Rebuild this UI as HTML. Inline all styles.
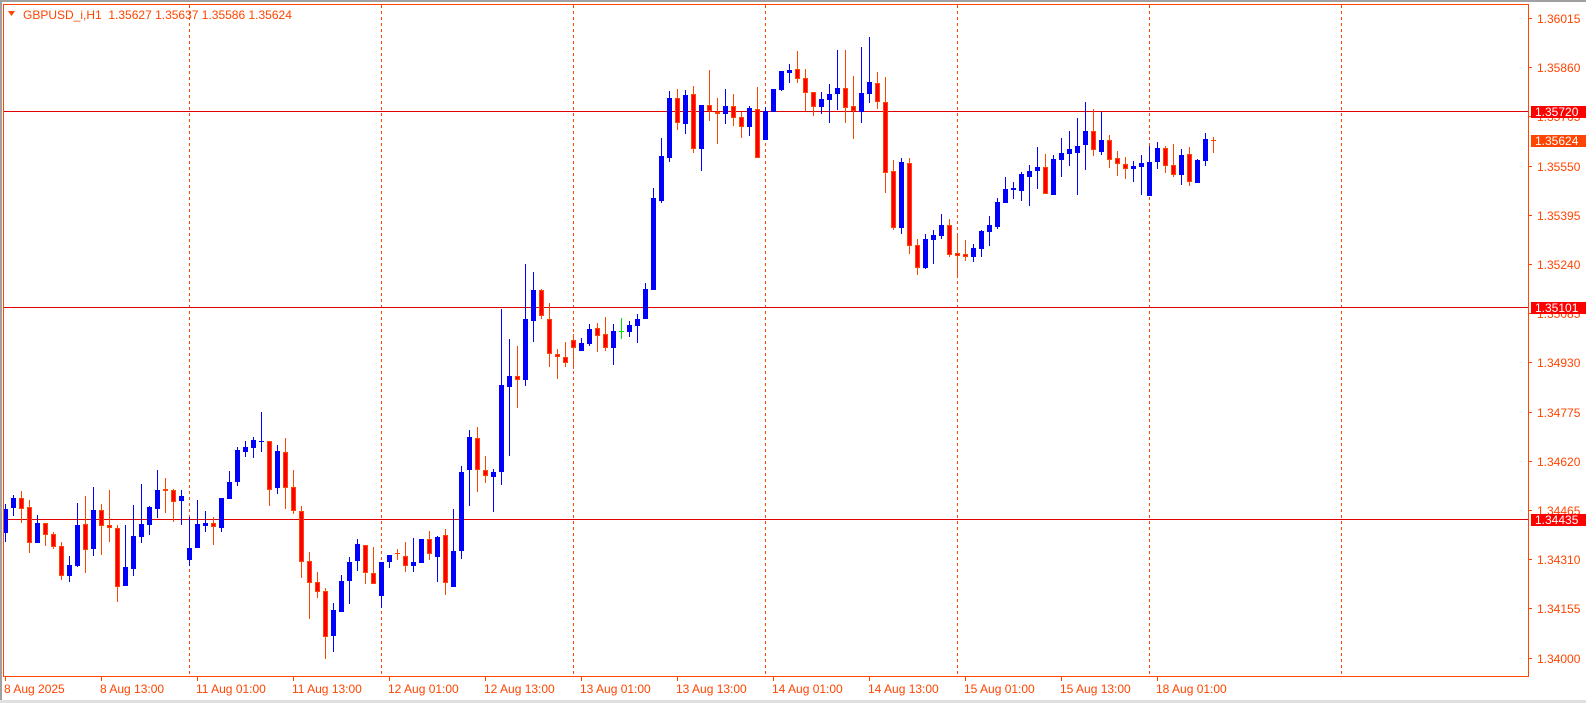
<!DOCTYPE html>
<html><head><meta charset="utf-8"><style>
html,body{margin:0;padding:0;background:#fff;width:1586px;height:703px;overflow:hidden}
svg{display:block}
text{font-family:"Liberation Sans",Arial,sans-serif;font-size:12px}
</style></head><body>
<svg id="s" width="1586" height="703" xmlns="http://www.w3.org/2000/svg">
<rect x="0" y="0" width="1586" height="703" fill="#fff"/>
<rect x="0" y="0" width="1586" height="2" fill="#a0a0a0"/>
<rect x="0" y="0" width="2" height="703" fill="#a0a0a0"/>
<rect x="0" y="700" width="1586" height="3" fill="#e0e0e0"/>
<g id="grid" stroke="#ff4500" stroke-width="1" stroke-dasharray="3,3"></g>
<line x1="3" y1="111.5" x2="1529" y2="111.5" stroke="#e00000"/>
<line x1="3" y1="307.5" x2="1529" y2="307.5" stroke="#e00000"/>
<line x1="3" y1="519.5" x2="1529" y2="519.5" stroke="#e00000"/>
<g id="c"></g>
<rect x="3.5" y="4.5" width="1525" height="672" fill="none" stroke="#ff4500"/>
<polygon points="8,11 15,11 11.5,16" fill="#ff4500"/>
<text x="23" y="19" fill="#ff4500" xml:space="preserve" style="white-space:pre">GBPUSD_i,H1  1.35627 1.35637 1.35586 1.35624</text>
<g id="ax" fill="#ff4500"></g>
<rect x="1531" y="106" width="55" height="12" fill="#ff0000"/>
<text x="1535" y="116" fill="#fff">1.35720</text>
<rect x="1531" y="135" width="55" height="12" fill="#ff4500"/>
<text x="1535" y="145" fill="#fff">1.35624</text>
<rect x="1531" y="302" width="55" height="12" fill="#ff0000"/>
<text x="1535" y="312" fill="#fff">1.35101</text>
<rect x="1531" y="514" width="55" height="12" fill="#ff0000"/>
<text x="1535" y="524" fill="#fff">1.34435</text>
</svg>
<script>
var NS="http://www.w3.org/2000/svg";
function el(p,t,a,txt){var e=document.createElementNS(NS,t);for(var k in a)e.setAttribute(k,a[k]);if(txt)e.textContent=txt;p.appendChild(e);return e;}
var g=document.getElementById('grid');
[189,381,573,765,957,1149,1341].forEach(function(x){el(g,'line',{x1:x+.5,y1:5,x2:x+.5,y2:676});});
var ax=document.getElementById('ax');
var prices=["1.36015","1.35860","1.35705","1.35550","1.35395","1.35240","1.35085","1.34930","1.34775","1.34620","1.34465","1.34310","1.34155","1.34000"];
prices.forEach(function(p,i){var y=18+i*49.2;el(ax,'rect',{x:1529,y:Math.round(y),width:3,height:1});el(ax,'text',{x:1537,y:Math.round(y)+5},p);});
var dates=["8 Aug 2025","8 Aug 13:00","11 Aug 01:00","11 Aug 13:00","12 Aug 01:00","12 Aug 13:00","13 Aug 01:00","13 Aug 13:00","14 Aug 01:00","14 Aug 13:00","15 Aug 01:00","15 Aug 13:00","18 Aug 01:00"];
dates.forEach(function(d,i){var x=5+96*i;el(ax,'rect',{x:x,y:677,width:1,height:4});el(ax,'text',{x:x-1,y:693},d);});
var D=[[533,509,504,542],[508,498,495,516],[498,509,491,523],[507,543,500,553],[543,523,515,543],[523,535,523,546],[534,547,532,549],[546,576,542,580],[576,565,556,582],[566,525,503,567],[524,550,496,573],[549,510,487,556],[510,526,504,555],[525,528,490,542],[528,587,525,602],[586,567,525,586],[569,536,505,576],[537,524,484,543],[525,507,506,535],[509,490,470,518],[489,491,478,513],[490,502,489,522],[501,496,490,525],[560,548,517,566],[548,524,500,548],[526,523,511,532],[523,527,517,545],[528,498,498,532],[499,482,471,499],[482,450,447,486],[452,447,441,457],[448,440,437,458],[442,441,412,452],[441,490,441,506],[488,451,445,494],[452,488,438,509],[487,511,470,514],[511,562,506,578],[561,583,552,619],[582,592,572,598],[591,637,588,659],[636,610,603,652],[612,581,575,612],[581,562,557,604],[561,544,539,571],[545,573,545,584],[573,584,547,584],[596,562,562,608],[562,555,555,568],[553,554,549,560],[556,566,542,572],[566,562,538,572],[563,539,539,563],[539,554,531,560],[557,537,536,582],[535,583,529,595],[587,551,509,587],[551,472,466,559],[470,437,430,506],[438,470,427,492],[470,476,456,483],[477,472,469,512],[472,385,309,485],[387,376,339,456],[376,380,346,408],[380,319,264,386],[321,290,272,342],[290,316,289,319],[319,354,303,367],[354,357,349,379],[357,363,342,367],[340,348,334,369],[351,343,338,351],[344,329,324,346],[328,336,323,352],[334,348,317,351],[348,331,324,365],[331,331,318,339,1],[332,325,321,337],[326,319,314,343],[319,289,283,319],[290,198,188,290],[201,156,138,203],[158,98,91,162],[98,123,89,130],[124,95,90,134],[94,149,86,153],[149,105,105,171],[105,111,70,121],[112,114,98,144],[114,106,89,124],[106,118,94,126],[117,127,112,138],[127,108,106,136],[109,158,87,158],[140,111,107,140],[112,89,89,112],[90,71,71,91],[73,70,64,83],[69,79,51,83],[78,93,69,111],[92,107,92,116],[107,99,92,114],[100,94,84,123],[94,88,50,110],[88,108,50,123],[106,111,76,139],[112,93,47,123],[94,82,37,103],[83,102,72,109],[102,173,77,193],[171,228,160,230],[228,162,158,234],[163,246,158,254],[245,268,239,275],[268,239,234,269],[240,235,230,264],[236,225,214,239],[225,255,219,257],[253,256,233,277],[254,257,240,261],[257,248,244,262],[249,231,230,257],[232,225,216,246],[227,202,198,229],[203,189,177,203],[190,188,182,199],[191,174,172,201],[177,171,165,206],[171,167,147,189],[167,194,154,194],[195,159,155,195],[160,153,138,177],[154,149,131,166],[153,146,118,195],[145,131,102,170],[131,150,109,156],[152,140,112,155],[140,160,135,168],[158,164,151,176],[164,169,157,179],[169,166,161,182],[167,163,155,195],[196,162,146,196],[162,148,142,169],[148,166,146,173],[165,175,144,177],[175,155,149,185],[154,182,147,186],[183,160,159,183],[161,139,133,166],[140,141,137,153]];
var c=document.getElementById('c');
D.forEach(function(d,i){
 var x=5+8*i,o=d[0],cl=d[1],h=d[2],l=d[3];
 var bull=cl<o, green=d[4];
 var col=green?"#00e000":(bull?"#0000ff":"#ff4500");
 el(c,'rect',{x:x,y:h,width:1,height:Math.max(1,l-h),fill:col});
 var top=Math.min(o,cl),bot=Math.max(o,cl),hh=Math.max(1,bot-top);
 if(green){el(c,'rect',{x:x-2,y:top,width:5,height:1,fill:col});return;}
 if(bull){el(c,'rect',{x:x-2,y:top,width:5,height:hh,fill:"#0000ff"});}
 else{el(c,'rect',{x:x-2,y:top,width:5,height:hh,fill:"#ff4500"});if(hh>2)el(c,'rect',{x:x-1,y:top+1,width:3,height:hh-2,fill:"#ff0000"});}
});
</script>
</body></html>
